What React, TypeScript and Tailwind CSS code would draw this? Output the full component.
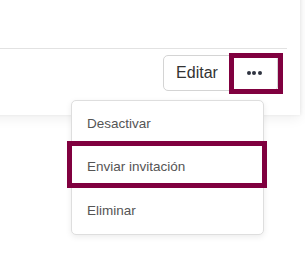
import React from 'react'

const menuItems = ['Desactivar', 'Enviar invitación', 'Eliminar']

export default function App() {
  return (
    <div className="relative w-[305px] h-[259px] overflow-hidden bg-white font-['Liberation_Sans',Arial,sans-serif]">
      {/* Card */}
      <div className="-ml-[20px] -mt-[20px] w-[320px] h-[135px] bg-white shadow-[0_3px_12px_rgba(0,0,0,0.07),1px_0_3px_rgba(0,0,0,0.06)]">
        <div className="h-[69px] mr-[13px] border-b border-[#e2e2e2]" />
        <div className="flex justify-end pr-[22px] pt-[6px]">
          <div className="flex h-[36px]">
            <button className="h-full w-[68px] border border-[#d4d4d4] rounded-l-[5px] text-[16px] text-[#333] bg-white">
              Editar
            </button>
            <button className="h-full w-[47px] border border-l-0 border-[#d4d4d4] rounded-r-[5px] bg-white flex items-center justify-center gap-[1.5px]">
              <span className="w-[4px] h-[4px] rounded-full bg-[#2f3340]" />
              <span className="w-[4px] h-[4px] rounded-full bg-[#2f3340]" />
              <span className="w-[4px] h-[4px] rounded-full bg-[#2f3340]" />
            </button>
          </div>
        </div>
      </div>

      {/* Dropdown menu */}
      <div className="absolute left-[71px] top-[100px] w-[193px] border border-[#dedede] rounded-[5px] bg-white shadow-[0_2px_6px_rgba(0,0,0,0.08)] py-[1px]">
        {menuItems.map(item => (
          <div
            key={item}
            className="h-[43.5px] flex items-center pl-[15px] text-[13.5px] text-[#555]"
          >
            {item}
          </div>
        ))}
      </div>

      {/* Highlight boxes */}
      <div className="absolute left-[229px] top-[53px] w-[54px] h-[41px] border-[5px] border-[#80003f]" />
      <div className="absolute left-[67px] top-[141px] w-[200px] h-[47px] border-[5px] border-[#80003f]" />
    </div>
  )
}
